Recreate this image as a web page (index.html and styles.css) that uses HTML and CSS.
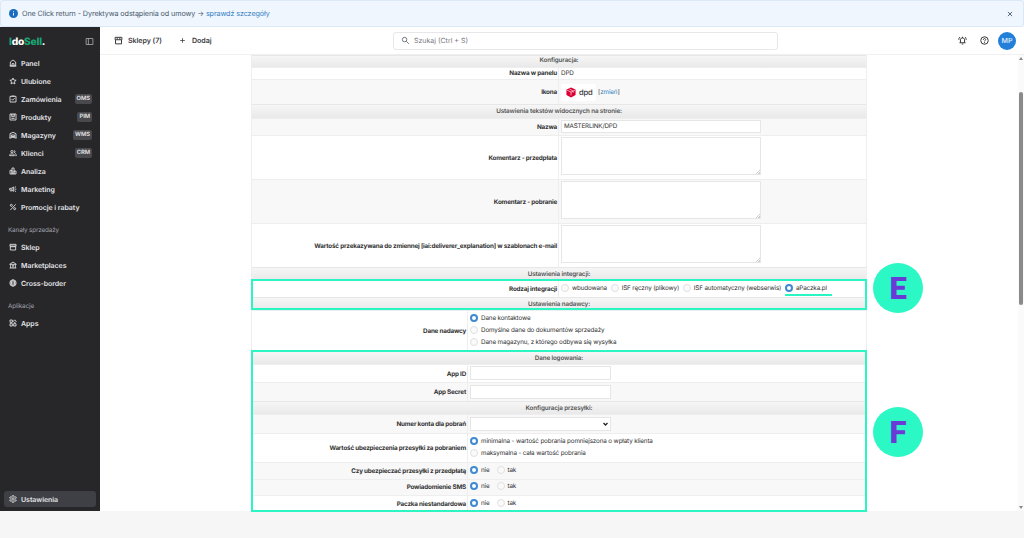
FILE: index.html
```html
<!DOCTYPE html>
<html lang="pl">
<head>
    <meta charset="UTF-8">
    <meta name="viewport" content="width=device-width, initial-scale=1.0">
    <title>IdoSell - Ustawienia DPD</title>
    <link rel="stylesheet" href="styles.css">
</head>
<body>
    <div class="notice">
        <svg class="info" viewBox="0 0 24 24"><circle cx="12" cy="12" r="12" fill="#1a6cc0"/><path d="M12 10.500v7M12 6v2.500" stroke="#fff" stroke-width="2.400"/></svg>
        <span class="notice-text">One Click return - Dyrektywa odstąpienia od umowy → <a>sprawdź szczegóły</a></span>
        <svg class="close" viewBox="0 0 10 10"><path d="M1.500 1.500l7 7M8.500 1.500l-7 7"/></svg>
    </div>

    <div class="app">
        <nav class="sidebar">
            <div class="brand">
                <span class="logo"><b>I</b>do<b>Sell</b>.</span>
                <svg class="collapse" viewBox="0 0 24 24"><path d="M3 4h18v16H3zM9 4v16"/></svg>
            </div>
            <a class="item"><svg viewBox="0 0 24 24"><path d="M4 21V9l8-6 8 6v12zM9 21v-7h6v7M2 21h20"/></svg>Panel</a>
            <a class="item"><svg viewBox="0 0 24 24"><path d="M12 3l2.700 6.200 6.800.6-5.200 4.400 1.600 6.600-5.900-3.500-5.900 3.500 1.600-6.600L2.500 9.800l6.800-.6z"/></svg>Ulubione</a>
            <a class="item"><svg viewBox="0 0 24 24"><path d="M3 4h18v17H3zM8 3h8M7.500 12l3.500 3.500 6-6"/></svg>Zamówienia<span class="tag">OMS</span></a>
            <a class="item"><svg viewBox="0 0 24 24"><path d="M3 3h18v18H3zM8 3v8h8V3M7 16h10M12 3v5"/></svg>Produkty<span class="tag">PIM</span></a>
            <a class="item"><svg viewBox="0 0 24 24"><path d="M3 21V8l9-4 9 4v13M7 21v-9h10v9M7 16h10M1 21h6M17 21h6M10 21v-4h4v4"/></svg>Magazyny<span class="tag">WMS</span></a>
            <a class="item"><svg viewBox="0 0 24 24"><circle cx="9" cy="8" r="3.500"/><path d="M2 20v-3c2-3 12-3 14 0v3zM15 4.500c4 0 4 7 0 7M18 14c3 .5 4 2 4 6h-3"/></svg>Klienci<span class="tag">CRM</span></a>
            <a class="item"><svg viewBox="0 0 24 24"><path d="M3 10h6v11H3zM9 3h6v18H9zM15 12h6v9h-6z"/></svg>Analiza</a>
            <a class="item"><svg viewBox="0 0 24 24"><path d="M2 10h5l7-4v13l-7-4H2zM6 15v5M17 12.500h5M17 8l4-3M17 17l4 3M9 10v5"/></svg>Marketing</a>
            <a class="item"><svg viewBox="0 0 24 24"><path d="M4 21L20 4"/><circle cx="7" cy="7" r="3"/><circle cx="17" cy="17" r="3"/></svg>Promocje i rabaty</a>
            <div class="group">Kanały sprzedaży</div>
            <a class="item"><svg viewBox="0 0 24 24"><path d="M4 11v10h16V11M3 4h18v5H3zM3 9c0 4 6 4 6 0 0 4 6 4 6 0 0 4 6 4 6 0"/></svg>Sklep</a>
            <a class="item"><svg viewBox="0 0 24 24"><path d="M5 21V10M19 21V10M2 10l10-7 10 7zM9 14h6M9 18h6M2 21h20"/></svg>Marketplaces</a>
            <a class="item"><svg viewBox="0 0 24 24"><circle cx="12" cy="12" r="9.500"/><ellipse cx="12" cy="12" rx="4.500" ry="9.500"/><path d="M3 9h18M3 15h18"/></svg>Cross-border</a>
            <div class="group">Aplikacje</div>
            <a class="item"><svg viewBox="0 0 24 24"><path d="M3 3h7v7H3zM3 14h7v7H3zM14 14h7v7h-7zM17 2.500l4.500 4.500-4.500 4.500L12.500 7z"/></svg>Apps</a>
            <a class="item settings"><svg viewBox="0 0 24 24"><path d="M10 2h4l.6 3 2.400 1.400 3-1 2 3.500L19.700 11v2l2.300 2-2 3.500-3-1-2.400 1.500-.6 3h-4l-.6-3L7 17.500l-3 1L2 15l2.300-2v-2L2 9l2-3.500 3 1L9.400 5z"/><circle cx="12" cy="12" r="3.500"/></svg>Ustawienia</a>
        </nav>

        <div class="main">
            <header class="topbar">
                <a class="top-link"><svg viewBox="0 0 24 24"><path d="M4 10v11h16V10M3 3.500h18V10H3zM8.500 4v6M15.500 4v6"/></svg>Sklepy (7)</a>
                <a class="top-link add"><svg viewBox="0 0 24 24"><path d="M12 4v16M4 12h16"/></svg>Dodaj</a>
                <div class="search">
                    <svg viewBox="0 0 24 24"><circle cx="9.500" cy="9.500" r="6"/><path d="M14 14l7 7"/></svg>
                    Szukaj (Ctrl + S)
                </div>
                <div class="tools">
                    <svg viewBox="0 0 24 24"><path d="M6.500 18V8.500c1-4.500 10-4.500 11 0V18M4 18h16M12 2v3M10 21.500h4M2 10c0-3 1-5 3-7M22 10c0-3-1-5-3-7"/></svg>
                    <svg viewBox="0 0 24 24"><circle cx="12" cy="12" r="10"/><path d="M9 10c0-4.500 6.500-4 6 0-.3 2-3 2-3 4.500M12 16.500V19"/></svg>
                    <span class="avatar">MP</span>
                </div>
            </header>

            <div class="content">
                <div class="form">
                    <div class="head first">Konfiguracja:</div>
                    <div class="row panel-name"><div class="label">Nazwa w panelu</div><div class="value">DPD</div></div>
                    <div class="row alt icon-row">
                        <div class="label">Ikona</div>
                        <div class="value">
                            <span class="dpd">
                                <svg viewBox="0 0 24 24"><path d="M12 0l11 5v13l-11 6L1 18V5z" fill="#dc0032"/><path d="M2 6l10 5 10-5M12 11v8M8 3.500l9 5v4" fill="none" stroke="#fff" stroke-width="1.500"/></svg>
                                dpd
                            </span>
                            [<a>zmień</a>]
                        </div>
                    </div>
                    <div class="head texts">Ustawienia tekstów widocznych na stronie:</div>
                    <div class="row alt name-row"><div class="label">Nazwa</div><div class="value"><span class="input wide">MASTERLINK/DPD</span></div></div>
                    <div class="row area-row"><div class="label">Komentarz - przedpłata</div><div class="value"><span class="area"></span></div></div>
                    <div class="row alt area-row"><div class="label">Komentarz - pobranie</div><div class="value"><span class="area"></span></div></div>
                    <div class="row area-row"><div class="label">Wartość przekazywana do zmiennej [iai:deliverer_explanation] w szablonach e-mail</div><div class="value"><span class="area"></span></div></div>
                    <div class="head">Ustawienia integracji:</div>

                    <div class="marked integration">
                        <div class="row kind-row">
                            <div class="label">Rodzaj integracji</div>
                            <div class="value kinds">
                                <span class="option"><i class="radio"></i>wbudowana</span>
                                <span class="option"><i class="radio"></i>ISF ręczny (plikowy)</span>
                                <span class="option"><i class="radio"></i>ISF automatyczny (webserwis)</span>
                                <span class="option chosen"><i class="radio on"></i>aPaczka.pl</span>
                            </div>
                        </div>
                        <div class="head">Ustawienia nadawcy:</div>
                        <span class="badge">E</span>
                    </div>

                    <div class="row narrow sender-row">
                        <div class="label">Dane nadawcy</div>
                        <div class="value stack">
                            <span class="option"><i class="radio on"></i>Dane kontaktowe</span>
                            <span class="option"><i class="radio"></i>Domyślne dane do dokumentów sprzedaży</span>
                            <span class="option"><i class="radio"></i>Dane magazynu, z którego odbywa się wysyłka</span>
                        </div>
                    </div>

                    <div class="marked login">
                        <div class="head">Dane logowania:</div>
                        <div class="row narrow app-id"><div class="label">App ID</div><div class="value"><span class="input"></span></div></div>
                        <div class="row narrow alt app-secret"><div class="label">App Secret</div><div class="value"><span class="input"></span></div></div>
                        <div class="head">Konfiguracja przesyłki:</div>
                        <div class="row narrow alt account"><div class="label">Numer konta dla pobrań</div><div class="value"><span class="input select"><svg viewBox="0 0 10 6"><path d="M1 1l4 4 4-4"/></svg></span></div></div>
                        <div class="row narrow insurance">
                            <div class="label">Wartość ubezpieczenia przesyłki za pobraniem</div>
                            <div class="value stack">
                                <span class="option"><i class="radio on"></i>minimalna - wartość pobrania pomniejszona o wpłaty klienta</span>
                                <span class="option"><i class="radio"></i>maksymalna - cała wartość pobrania</span>
                            </div>
                        </div>
                        <div class="row narrow alt yes-no"><div class="label">Czy ubezpieczać przesyłki z przedpłatą</div><div class="value"><span class="option"><i class="radio on"></i>nie</span><span class="option"><i class="radio"></i>tak</span></div></div>
                        <div class="row narrow alt yes-no"><div class="label">Powiadomienie SMS</div><div class="value"><span class="option"><i class="radio on"></i>nie</span><span class="option"><i class="radio"></i>tak</span></div></div>
                        <div class="row narrow yes-no"><div class="label">Paczka niestandardowa</div><div class="value"><span class="option"><i class="radio on"></i>nie</span><span class="option"><i class="radio"></i>tak</span></div></div>
                        <span class="badge">F</span>
                    </div>
                </div>
                <div class="scrollbar"><i class="up"></i><i class="thumb"></i><i class="down"></i></div>
            </div>
        </div>
    </div>
</body>
</html>
```
FILE: styles.css
```css
* {
    box-sizing: border-box;
}
body {
    margin: 0;
    height: 538px;
    overflow: hidden;
    background: #f6f6f6;
    font-family: Inter, "Liberation Sans", sans-serif;
    font-size: 6.3px;
    text-rendering: geometricPrecision;
    color: #333;
}
svg {
    fill: none;
    stroke: currentColor;
    stroke-width: 2.6;
    flex: none;
}
a {
    color: #3580c4;
}

/* notice bar */
.notice {
    height: 27px;
    display: flex;
    align-items: center;
    padding: 0 10px 0 8px;
    background: #f0f6fe;
    border: 1px solid #dbe8f8;
    border-radius: 3px;
    font-size: 7.2px;
    letter-spacing: -0.09px;
    color: #46586a;
}
.info {
    width: 9px;
    height: 9px;
    margin-right: 4px;
    stroke: none;
}
.close {
    width: 6px;
    height: 6px;
    margin-left: auto;
    stroke: #46586a;
    stroke-width: 1.5;
}

.app {
    display: flex;
    height: 484px;
}

/* sidebar */
.sidebar {
    width: 100px;
    display: flex;
    flex-direction: column;
    padding: 0 4px 4px;
    background: #27272a;
    color: #e4e4e7;
    letter-spacing: -0.05px;
}
.brand {
    height: 27px;
    display: flex;
    align-items: center;
    justify-content: space-between;
    padding: 2px 2px 0 5px;
}
.logo {
    font-size: 10.2px;
    font-weight: 800;
    letter-spacing: -0.22px;
    color: #fff;
}
.logo b {
    font-weight: 800;
    color: #17a673;
}
.collapse {
    width: 9px;
    height: 9px;
    stroke-width: 2;
    color: #b5b5b9;
}
.item {
    height: 18px;
    display: flex;
    align-items: center;
    padding: 0 4px 0 5px;
    font-size: 7px;
    font-weight: 600;
    color: #e4e4e7;
}
.item svg {
    width: 8px;
    height: 8px;
    margin-right: 4px;
}
.tag {
    margin-left: auto;
    padding: 0 2px;
    height: 10px;
    line-height: 10px;
    border-radius: 2px;
    background: #48484d;
    font-size: 5.8px;
}
.group {
    height: 22px;
    padding: 10px 0 0 4px;
    line-height: 8px;
    font-size: 6.3px;
    letter-spacing: -0.12px;
    color: #a1a1aa;
}
.settings {
    height: 16px;
    margin-top: auto;
    border-radius: 3px;
    background: #3f3f46;
}

/* top bar */
.main {
    flex: 1;
    min-width: 0;
    background: #fff;
}
.topbar {
    height: 28px;
    display: flex;
    align-items: center;
    padding: 0 8px 0 14px;
    border-bottom: 1px solid #f0f0f1;
}
.top-link {
    width: 65px;
    display: flex;
    align-items: center;
    font-size: 7.1px;
    font-weight: 600;
    letter-spacing: -0.05px;
    color: #3a3a3e;
}
.top-link svg {
    width: 9px;
    height: 9px;
    margin-right: 5px;
}
.top-link.add svg {
    width: 7px;
    height: 7px;
    margin-right: 6px;
}
.search {
    width: 385px;
    height: 18px;
    display: flex;
    align-items: center;
    margin-left: 149px;
    padding-left: 7px;
    border: 1px solid #e7e7e9;
    border-radius: 3px;
    font-size: 7px;
    color: #75757b;
}
.search svg {
    width: 9px;
    height: 9px;
    margin-right: 4px;
}
.tools {
    display: flex;
    align-items: center;
    gap: 13px;
    margin-left: auto;
}
.tools svg {
    width: 9px;
    height: 9px;
}
.avatar {
    width: 18px;
    height: 18px;
    margin-left: -4px;
    border-radius: 50%;
    background: #2380da;
    color: #e3effb;
    font-size: 7px;
    font-weight: 500;
    line-height: 18px;
    text-align: center;
}

/* settings form */
.content {
    height: 456px;
    display: flex;
    justify-content: space-between;
    padding-left: 151px;
    letter-spacing: -0.14px;
}
.form {
    width: 616px;
    border: solid #eee;
    border-width: 0 1px;
}
.head {
    height: 13px;
    line-height: 12px;
    border-top: 1px solid #e7e7e7;
    background: linear-gradient(#f6f6f6, #e9e9e9);
    font-weight: 600;
    color: #555;
    text-align: center;
}
.head.first {
    height: 12px;
    line-height: 9px;
}
.head.texts {
    height: 14px;
}
.row {
    display: flex;
    border-top: 1px solid #eee;
    background: #fff;
}
.alt {
    background: #f8f8f8;
}
.label {
    width: 307px;
    display: flex;
    align-items: center;
    justify-content: flex-end;
    padding-right: 1px;
    border-right: 1px solid #eee;
    font-weight: 700;
    letter-spacing: -0.19px;
}
.narrow .label {
    width: 216px;
}
.value {
    display: flex;
    align-items: center;
    padding-left: 2px;
}
.panel-name {
    height: 12px;
    line-height: 9px;
}
.panel-name .label,
.panel-name .value {
    padding-bottom: 1px;
}
.icon-row {
    height: 25px;
}
.name-row {
    height: 17px;
}
.area-row {
    height: 44px;
}
.kind-row {
    height: 17px;
}
.sender-row {
    height: 41px;
}
.dpd {
    width: 35px;
    height: 17px;
    display: flex;
    align-items: center;
    gap: 3px;
    margin-right: 2px;
    padding-left: 5px;
    border-radius: 3px;
    background: #fff;
    font-size: 7.6px;
    font-weight: 500;
}
.dpd svg {
    width: 10px;
    height: 11px;
    stroke: none;
}
.input {
    width: 141px;
    height: 14px;
    margin-bottom: 1px;
    padding-left: 2px;
    border: 1px solid #e6e6e6;
    background: #fff;
}
.wide {
    width: 200px;
    height: 13px;
    line-height: 11px;
    letter-spacing: -0.18px;
}
.area {
    width: 200px;
    height: 38px;
    margin-bottom: 3px;
    border: 1px solid #e6e6e6;
    background: linear-gradient(135deg, transparent 50%, #ccc 50%, #ccc 60%, transparent 60%, transparent 75%, #ccc 75%) right bottom / 4px 4px no-repeat #fff;
}
.select {
    display: flex;
    align-items: center;
    justify-content: flex-end;
    padding-right: 2px;
}
.select svg {
    width: 5px;
    height: 4px;
    color: #222;
}
.option {
    display: flex;
    align-items: center;
    height: 12.3px;
    white-space: nowrap;
}
.radio {
    width: 8px;
    height: 8px;
    margin-right: 3px;
    border: 1px solid #e0e0e0;
    border-radius: 50%;
    background: #fafafa;
}
.radio.on {
    border: 2px solid #3f8ad0;
    background: #fff;
}
.stack {
    flex-direction: column;
    align-items: flex-start;
    justify-content: center;
    padding-bottom: 2px;
}
.kinds {
    align-items: flex-start;
    gap: 3.7px;
    padding-top: 1px;
}
.chosen {
    height: 14px;
    padding-right: 5px;
    border-bottom: 2px solid #2cf5c4;
}

/* highlighted parts of the form */
.marked {
    position: relative;
}
.marked::after {
    content: "";
    position: absolute;
    inset: -1px -1px 0;
    border: 2px solid #2cf5c4;
}
.badge {
    position: absolute;
    left: 621px;
    top: 50%;
    width: 50px;
    height: 50px;
    margin-top: -24px;
    border-radius: 50%;
    background: #2cf8c5;
    color: #6a3ad6;
    font-family: Roboto, sans-serif;
    font-size: 31px;
    font-weight: 900;
    line-height: 51px;
    text-align: center;
}
.integration .badge {
    margin-top: -32px;
}
.app-id {
    height: 18px;
}
.app-secret {
    height: 19px;
}
.account {
    height: 19px;
}
.insurance {
    height: 29px;
}
.yes-no {
    height: 16.5px;
}
.yes-no .value {
    gap: 7px;
    padding-bottom: 2px;
}

/* page scrollbar */
.scrollbar {
    width: 6px;
    display: flex;
    flex-direction: column;
    align-items: center;
    padding: 2px 0;
    background: #fafafa;
}
.up {
    border: 2px solid transparent;
    border-top: 0;
    border-bottom: 3px solid #888;
}
.down {
    margin-top: auto;
    border: 2px solid transparent;
    border-bottom: 0;
    border-top: 3px solid #888;
}
.thumb {
    width: 4px;
    height: 213px;
    margin-top: 32px;
    border-radius: 2px;
    background: #8a8a8a;
}
```
